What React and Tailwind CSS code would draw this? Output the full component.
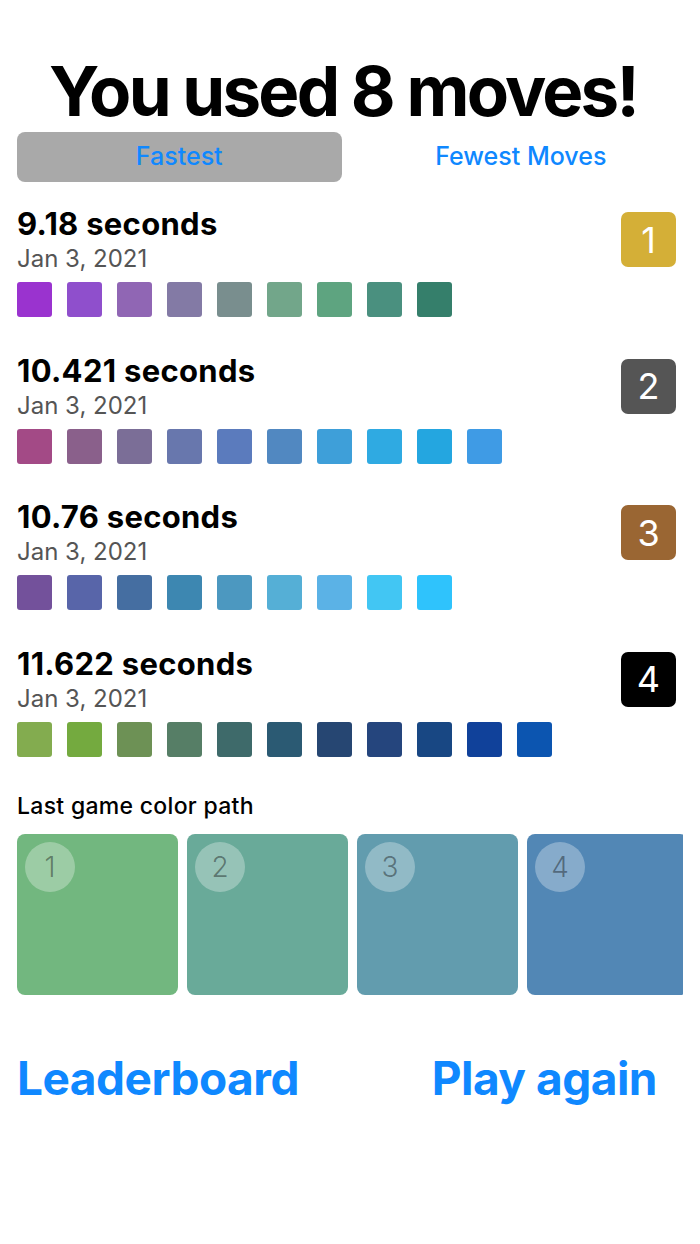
import React from "react";

const results = [
  {
    time: "9.18 seconds",
    rank: "1",
    badge: "bg-[#d4af37]",
    swatches: [
      "bg-[#9a33cf]",
      "bg-[#8f4fcc]",
      "bg-[#9066b4]",
      "bg-[#837aa5]",
      "bg-[#798e8e]",
      "bg-[#72a68a]",
      "bg-[#5ea480]",
      "bg-[#4a907f]",
      "bg-[#357f6b]",
    ],
  },
  {
    time: "10.421 seconds",
    rank: "2",
    badge: "bg-[#555555]",
    swatches: [
      "bg-[#a34a86]",
      "bg-[#8a608b]",
      "bg-[#7b6e97]",
      "bg-[#6877ad]",
      "bg-[#5b7bbd]",
      "bg-[#5188c1]",
      "bg-[#3e9fd9]",
      "bg-[#2faae2]",
      "bg-[#24a6e0]",
      "bg-[#3f9be5]",
    ],
  },
  {
    time: "10.76 seconds",
    rank: "3",
    badge: "bg-[#9a6633]",
    swatches: [
      "bg-[#73519b]",
      "bg-[#5865a9]",
      "bg-[#456ea1]",
      "bg-[#3d87b1]",
      "bg-[#4c98c0]",
      "bg-[#55afd6]",
      "bg-[#5bb2e6]",
      "bg-[#42c6f3]",
      "bg-[#2fc3fc]",
    ],
  },
  {
    time: "11.622 seconds",
    rank: "4",
    badge: "bg-black",
    swatches: [
      "bg-[#83ac4f]",
      "bg-[#74aa3f]",
      "bg-[#6d9155]",
      "bg-[#567e66]",
      "bg-[#3e6a6a]",
      "bg-[#2b5a73]",
      "bg-[#264672]",
      "bg-[#25457d]",
      "bg-[#184783]",
      "bg-[#10419a]",
      "bg-[#0c55b0]",
    ],
  },
];

const path = [
  { n: "1", bg: "bg-[#72b77f]" },
  { n: "2", bg: "bg-[#69aa99]" },
  { n: "3", bg: "bg-[#629cae]" },
  { n: "4", bg: "bg-[#5287b5]" },
];

function ResultRow({ item }) {
  return (
    <div className="flex items-start justify-between">
      <div className="flex flex-col">
        <div className="text-[31px] leading-[36px] font-bold tracking-[0.3px] text-black">
          {item.time}
        </div>
        <div className="mt-[2px] text-[24px] leading-[30px] text-[#555555]">
          Jan 3, 2021
        </div>
        <div className="mt-[8px] flex gap-[15px]">
          {item.swatches.map((c, i) => (
            <div key={i} className={`h-[35px] w-[35px] rounded-[3px] ${c}`} />
          ))}
        </div>
      </div>
      <div
        className={`mt-[6px] mr-[7px] flex h-[55px] w-[55px] items-center justify-center rounded-[7px] text-[36px] leading-none text-white ${item.badge}`}
      >
        {item.rank}
      </div>
    </div>
  );
}

export default function App() {
  return (
    <div
      className="min-h-screen w-full bg-white px-[17px] pt-[56px]"
      style={{ fontFamily: "Inter, 'Noto Sans', sans-serif" }}
    >
      <h1 className="pr-[14px] text-center text-[69px] leading-[70px] font-bold tracking-[-2.8px] text-black">
        You used 8 moves!
      </h1>

      <div className="mt-[6px] flex gap-[17px]">
        <button className="flex h-[50px] flex-1 items-center justify-center rounded-[8px] bg-[#a9a9a9] text-[25px] font-medium text-[#0f88ff]">
          Fastest
        </button>
        <button className="flex h-[50px] flex-1 items-center justify-center rounded-[8px] text-[25px] font-medium text-[#0f88ff]">
          Fewest Moves
        </button>
      </div>

      <div className="mt-[24px] flex flex-col gap-[35.5px]">
        {results.map((item) => (
          <ResultRow key={item.rank} item={item} />
        ))}
      </div>

      <div className="mt-[35px] text-[23px] leading-[28px] font-medium tracking-[0.3px] text-black">
        Last game color path
      </div>

      <div className="mt-[14px] flex gap-[9px] overflow-hidden">
        {path.map((p) => (
          <div
            key={p.n}
            className={`relative h-[161px] w-[161px] shrink-0 rounded-[8px] ${p.bg}`}
          >
            <div className="absolute left-[8px] top-[8px] flex h-[50px] w-[50px] items-center justify-center rounded-full bg-white/30 text-[28px] font-light text-black/40">
              {p.n}
            </div>
          </div>
        ))}
      </div>

      <div className="mt-[60px] flex items-start justify-between pr-[26px]">
        <button className="text-[46px] leading-none font-bold tracking-[-0.5px] text-[#0f88ff]">
          Leaderboard
        </button>
        <button className="text-[46px] leading-none font-bold tracking-[-0.5px] text-[#0f88ff]">
          Play again
        </button>
      </div>
    </div>
  );
}
